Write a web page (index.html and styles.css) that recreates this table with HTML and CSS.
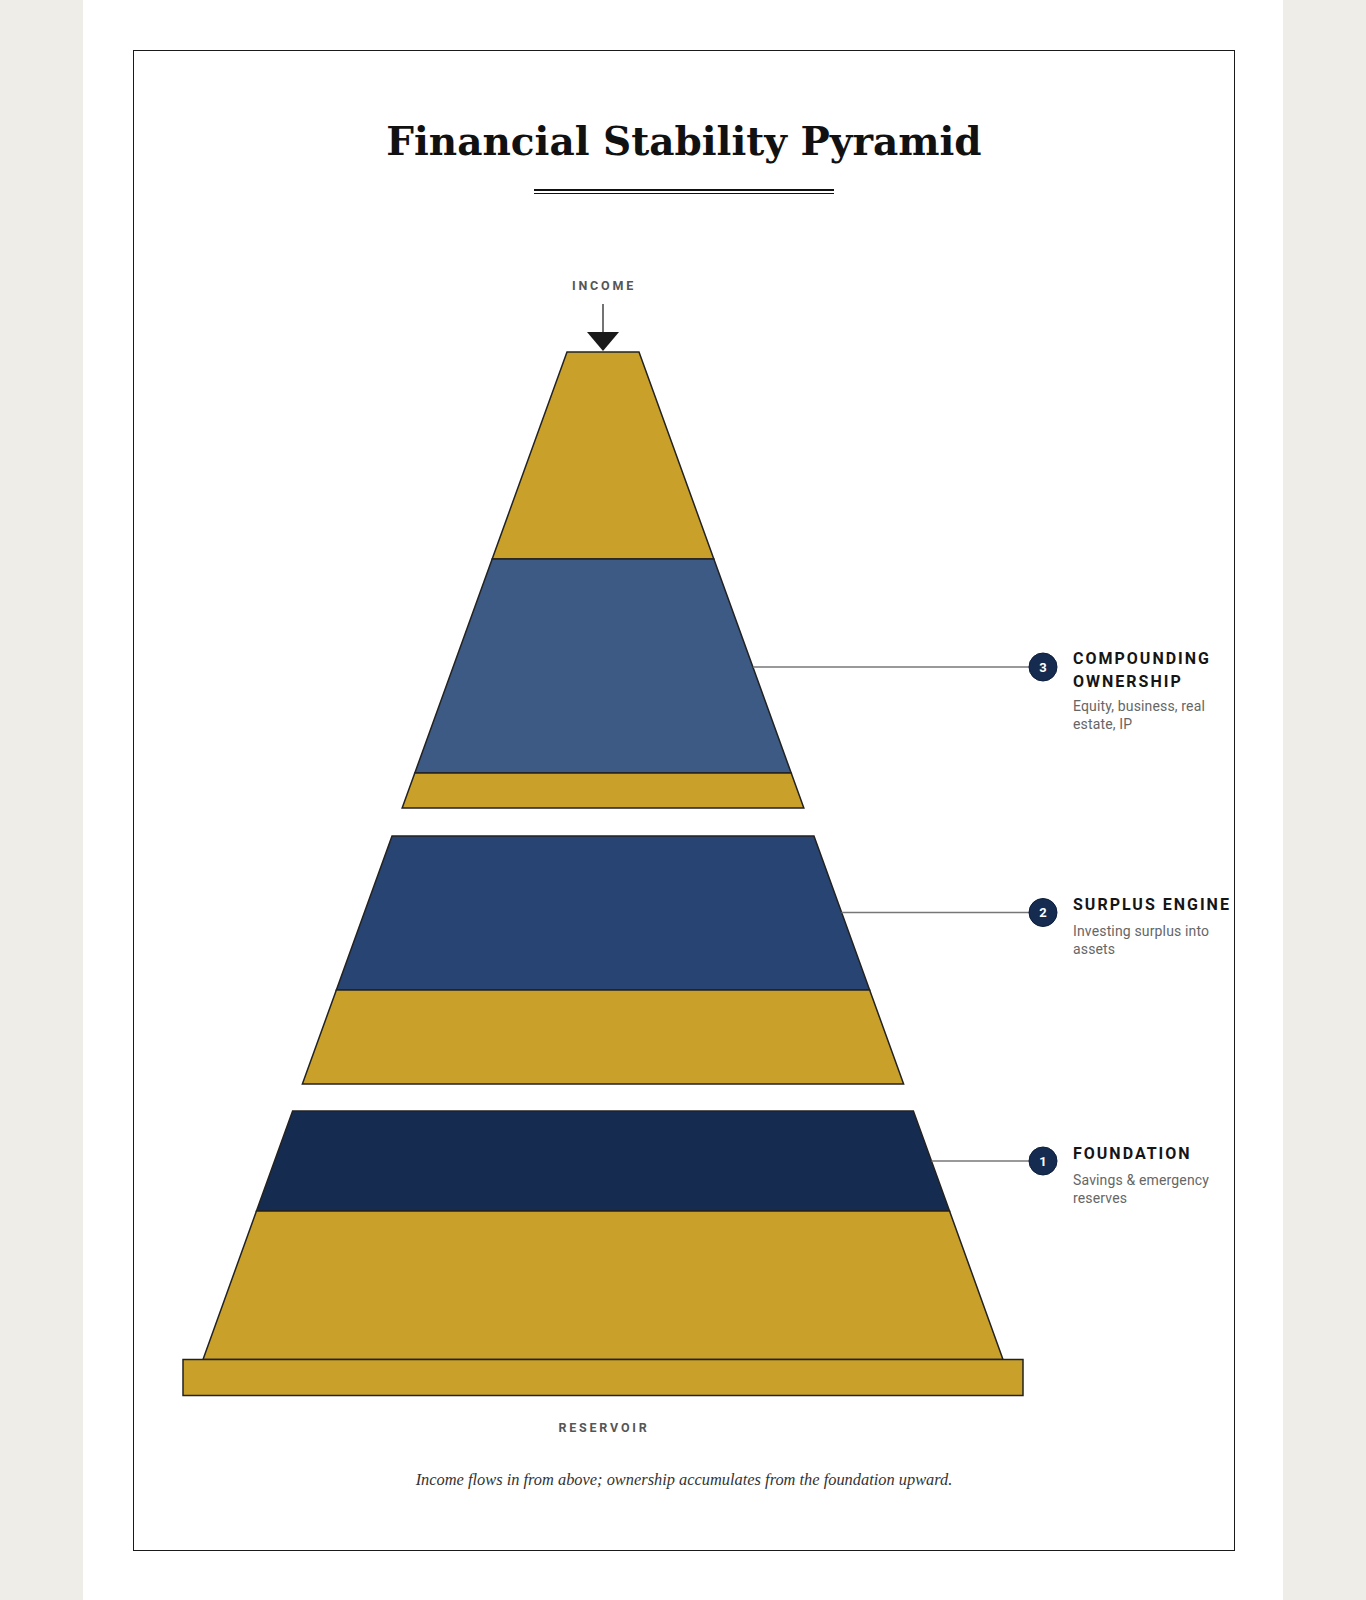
FILE: index.html
```html
<!DOCTYPE html>
<html lang="en">
<head>
<meta charset="utf-8">
<title>Financial Stability Pyramid</title>
<link rel="stylesheet" href="styles.css">
</head>
<body>
<main class="page">
  <section class="frame">
    <h1 class="title">Financial Stability Pyramid</h1>
    <div class="rule"></div>
    <svg class="diagram" viewBox="0 0 1100 1180" width="1100" height="1180" xmlns="http://www.w3.org/2000/svg">
      <!-- income arrow -->
      <text class="flow-label" x="470" y="29.5" text-anchor="middle">INCOME</text>
      <line class="arrow-line" x1="469" y1="44" x2="469" y2="74"/>
      <polygon class="arrow-head" points="453,72 485,72 469,91"/>

      <!-- tier 3 -->
      <polygon class="gold" points="433,92 505,92 579.83,299 358.17,299"/>
      <polygon class="blue-3" points="358.17,299 579.83,299 657.19,513 280.81,513"/>
      <polygon class="gold" points="280.81,513 657.19,513 669.84,548 268.16,548"/>

      <!-- tier 2 -->
      <polygon class="blue-2" points="258.03,576 679.97,576 735.64,730 202.36,730"/>
      <polygon class="gold" points="202.36,730 735.64,730 769.62,824 168.38,824"/>

      <!-- tier 1 -->
      <polygon class="blue-1" points="158.62,851 779.38,851 815.53,951 122.47,951"/>
      <polygon class="gold" points="122.47,951 815.53,951 869,1099.5 69,1099.5"/>

      <!-- reservoir -->
      <rect class="gold" x="49" y="1099.5" width="840" height="36"/>
      <text class="flow-label" x="470" y="1171.5" text-anchor="middle">RESERVOIR</text>

      <!-- leaders -->
      <line class="leader" x1="618.9" y1="407" x2="895" y2="407"/>
      <line class="leader" x1="707.4" y1="652.5" x2="895" y2="652.5"/>
      <line class="leader" x1="797.5" y1="901" x2="895" y2="901"/>

      <g class="marker">
        <circle cx="909" cy="407" r="14"/>
        <text x="909" y="411.5" text-anchor="middle">3</text>
      </g>
      <g class="marker">
        <circle cx="909" cy="652.5" r="14"/>
        <text x="909" y="657" text-anchor="middle">2</text>
      </g>
      <g class="marker">
        <circle cx="909" cy="901" r="14"/>
        <text x="909" y="905.5" text-anchor="middle">1</text>
      </g>

      <!-- labels -->
      <text class="tier-title" x="939" y="404">COMPOUNDING</text>
      <text class="tier-title" x="939" y="427">OWNERSHIP</text>
      <text class="tier-desc" x="939" y="451">Equity, business, real</text>
      <text class="tier-desc" x="939" y="469">estate, IP</text>

      <text class="tier-title" x="939" y="650">SURPLUS ENGINE</text>
      <text class="tier-desc" x="939" y="676">Investing surplus into</text>
      <text class="tier-desc" x="939" y="694">assets</text>

      <text class="tier-title" x="939" y="899">FOUNDATION</text>
      <text class="tier-desc" x="939" y="925">Savings &amp; emergency</text>
      <text class="tier-desc" x="939" y="943">reserves</text>
    </svg>
    <p class="caption">Income flows in from above; ownership accumulates from the foundation upward.</p>
  </section>
</main>
</body>
</html>
```

FILE: styles.css
```css
html, body {
  margin: 0;
  padding: 0;
}

body {
  background: #eeede8;
}

.page {
  width: 1200px;
  margin: 0 auto;
  background: #ffffff;
  padding: 50px 48px 49px 50px;
  box-sizing: border-box;
}

.frame {
  border: 1px solid #1a1a1a;
  padding: 64px 0 58px;
  display: flex;
  flex-direction: column;
  align-items: center;
}

.title {
  margin: 0;
  font: 700 39px/52px "DejaVu Serif", "Liberation Serif", serif;
  color: #111111;
}

.rule {
  width: 300px;
  height: 2px;
  margin-top: 22px;
  border-top: 2px solid #111111;
  border-bottom: 1px solid #111111;
}

.diagram {
  display: block;
  align-self: flex-start;
  margin-top: 66px;
  overflow: visible;
}

.caption {
  margin: 28px 0 0;
  font: italic 16.4px/24px "Liberation Serif", serif;
  color: #333333;
}

.gold {
  fill: #c9a12a;
  stroke: #222222;
  stroke-width: 1.5;
  stroke-linejoin: miter;
}

.blue-3 {
  fill: #3c5a84;
  stroke: #222222;
  stroke-width: 1.5;
}

.blue-2 {
  fill: #284473;
  stroke: #222222;
  stroke-width: 1.5;
}

.blue-1 {
  fill: #152b50;
  stroke: #222222;
  stroke-width: 1.5;
}

.arrow-line {
  stroke: #444444;
  stroke-width: 1.5;
}

.arrow-head {
  fill: #1a1a1a;
}

.flow-label {
  font: 700 12.5px "Roboto", "Liberation Sans", sans-serif;
  letter-spacing: 2.8px;
  fill: #555555;
}

.leader {
  stroke: #777777;
  stroke-width: 1.5;
}

.marker circle {
  fill: #152b50;
  stroke: #0d1d3a;
  stroke-width: 1;
}

.marker text {
  font: 700 13px "Roboto", "Liberation Sans", sans-serif;
  fill: #ffffff;
}

.tier-title {
  font: 700 16px "Roboto", "Liberation Sans", sans-serif;
  letter-spacing: 2px;
  fill: #151515;
}

.tier-desc {
  font: 400 14px "Roboto", "Liberation Sans", sans-serif;
  letter-spacing: 0.15px;
  fill: #666666;
}
```
